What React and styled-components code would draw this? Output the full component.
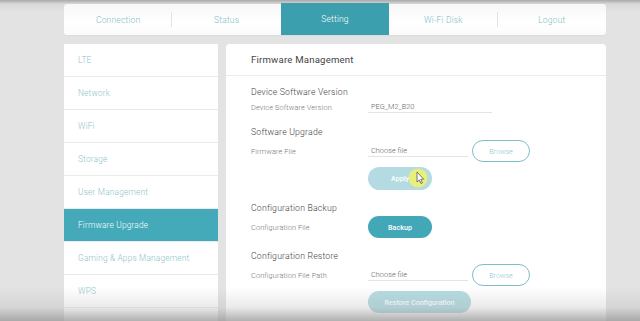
import React from 'react'
import styled, { createGlobalStyle } from 'styled-components'

const tabs = ['Connection', 'Status', 'Setting', 'Wi-Fi Disk', 'Logout']
const menu = [
  'LTE',
  'Network',
  'WiFi',
  'Storage',
  'User Management',
  'Firmware Upgrade',
  'Gaming & Apps Management',
  'WPS',
  '',
]

const Global = createGlobalStyle`
  html, body {
    margin: 0;
    padding: 0;
    background: #e2e2e2;
    font-family: Roboto, "Liberation Sans", sans-serif;
    overflow: hidden;
  }
`

const Page = styled.div`
  position: relative;
  width: 640px;
  height: 321px;
  box-sizing: border-box;
  padding: 4px 34px 0 64px;
  background: linear-gradient(180deg, #a9a9a9 0px, #d9d9d9 4px, #e3e3e3 12px, #e3e3e3 100%);
  overflow: hidden;
`

const Nav = styled.div`
  display: grid;
  grid-template-columns: repeat(5, 1fr);
  height: 31px;
  background: linear-gradient(180deg, #f7f7f7, #ffffff 60%, #fbfbfb);
  border-radius: 3px;
  box-shadow: 0 1px 1px rgba(0, 0, 0, 0.04);
`

const Tab = styled.div`
  position: relative;
  display: flex;
  align-items: center;
  justify-content: center;
  font-size: 8.5px;
  font-weight: 300;
  letter-spacing: 0.2px;
  color: ${p => (p.$active ? '#ffffff' : '#7fbcc7')};
  background: ${p => (p.$active ? '#3c9fad' : 'transparent')};
  margin-top: ${p => (p.$active ? '-1px' : '0')};
  &::after {
    content: '';
    display: ${p => (p.$divider ? 'block' : 'none')};
    position: absolute;
    right: 0;
    top: 8px;
    bottom: 8px;
    width: 1px;
    background: #e3e3e3;
  }
`

const Main = styled.div`
  display: flex;
  gap: 8px;
  margin-top: 9px;
`

const Sidebar = styled.div`
  width: 154px;
  flex: none;
  background: #fff;
  border-radius: 4px 4px 0 0;
`

const MenuItem = styled.div`
  height: 32px;
  border-bottom: 1px solid #ebebeb;
  display: flex;
  align-items: center;
  padding-left: 14px;
  font-size: 8.3px;
  font-weight: 300;
  letter-spacing: 0.2px;
  color: ${p => (p.$active ? '#ffffff' : '#8cc3cc')};
  background: ${p => (p.$active ? '#44a9b8' : '#ffffff')};
`

const Panel = styled.div`
  width: 380px;
  flex: none;
  background: #fff;
  border-radius: 4px 4px 0 0;
  height: 290px;
`

const PanelHead = styled.div`
  height: 31px;
  border-bottom: 1px solid #ececec;
  display: flex;
  align-items: center;
  padding-left: 25px;
  font-size: 9.6px;
  color: #444;
  letter-spacing: 0.2px;
`

const PanelBody = styled.div`
  padding: 8px 0 0 25px;
  display: flex;
  flex-direction: column;
  gap: 10px;
`

const Section = styled.div`
  display: flex;
  flex-direction: column;
`

const SectionTitle = styled.div`
  height: 16px;
  display: flex;
  align-items: center;
  font-size: 8.7px;
  font-weight: 300;
  color: #3f3f3f;
  letter-spacing: 0.2px;
`

const Row = styled.div`
  display: flex;
  align-items: center;
  height: ${p => p.$h || 22}px;
`

const Label = styled.div`
  width: 117px;
  flex: none;
  font-size: 7.4px;
  font-weight: 300;
  color: #777;
  letter-spacing: 0.1px;
`

const Field = styled.div`
  width: ${p => p.$w}px;
  box-sizing: border-box;
  height: 12px;
  border-bottom: 1px solid #e4e4e4;
  display: flex;
  align-items: center;
  padding-left: 3px;
  font-size: 7.4px;
  font-weight: 300;
  color: #666;
`

const Button = styled.div`
  width: ${p => p.$w}px;
  height: ${p => p.$h || 22}px;
  box-sizing: border-box;
  border-radius: 12px;
  display: flex;
  align-items: center;
  justify-content: center;
  font-size: 7.2px;
  font-weight: ${p => (p.$variant === 'outline' ? 300 : 500)};
  margin-left: ${p => p.$ml || 0}px;
  color: ${p => (p.$variant === 'outline' ? '#8fc7d0' : '#ffffff')};
  background: ${p =>
    p.$variant === 'solid' ? '#42a8b8' : p.$variant === 'faded' ? '#b3dbe1' : '#ffffff'};
  border: ${p => (p.$variant === 'outline' ? '1.5px solid #7cbfca' : 'none')};
`

const Indent = styled.div`
  padding-left: 117px;
  margin-top: 5px;
`

const Shade = styled.div`
  position: absolute;
  left: 0;
  right: 0;
  bottom: 0;
  height: 34px;
  pointer-events: none;
  background: linear-gradient(180deg, rgba(170, 170, 170, 0) 0%, rgba(170, 170, 170, 0.25) 60%, rgba(150, 150, 150, 0.75) 100%);
`

const Pointer = styled.svg`
  position: absolute;
  left: 407px;
  top: 167px;
  pointer-events: none;
`

const App = () => {
  return (
    <>
      <Global />
      <Page>
        <Nav>
          {tabs.map((t, i) => (
            <Tab key={t} $active={t === 'Setting'} $divider={i === 0 || i === 3}>
              {t}
            </Tab>
          ))}
        </Nav>
        <Main>
          <Sidebar>
            {menu.map((m, i) => (
              <MenuItem key={i} $active={m === 'Firmware Upgrade'}>
                {m}
              </MenuItem>
            ))}
          </Sidebar>
          <Panel>
            <PanelHead>Firmware Management</PanelHead>
            <PanelBody>
              <Section>
                <SectionTitle>Device Software Version</SectionTitle>
                <Row $h={14}>
                  <Label>Device Software Version</Label>
                  <Field $w={124}>PEG_M2_B20</Field>
                </Row>
              </Section>
              <Section>
                <SectionTitle>Software Upgrade</SectionTitle>
                <Row>
                  <Label>Firmware File</Label>
                  <Field $w={100}>Choose file</Field>
                  <Button $variant="outline" $w={58} $ml={4}>Browse</Button>
                </Row>
                <Indent>
                  <Button $variant="faded" $w={64} $h={23}>Apply</Button>
                </Indent>
              </Section>
              <Section>
                <SectionTitle>Configuration Backup</SectionTitle>
                <Row>
                  <Label>Configuration File</Label>
                  <Button $variant="solid" $w={64}>Backup</Button>
                </Row>
              </Section>
              <Section>
                <SectionTitle>Configuration Restore</SectionTitle>
                <Row>
                  <Label>Configuration File Path</Label>
                  <Field $w={100}>Choose file</Field>
                  <Button $variant="outline" $w={58} $ml={4}>Browse</Button>
                </Row>
                <Indent>
                  <Button $variant="faded" $w={103}>Restore Configuration</Button>
                </Indent>
              </Section>
            </PanelBody>
          </Panel>
        </Main>
        <Pointer width="22" height="22" viewBox="0 0 22 22">
          <circle cx="11" cy="11" r="9.5" fill="rgba(250, 245, 90, 0.75)" />
          <path d="M10 5 L10 15 L12.3 13 L14 16.5 L15.4 15.8 L13.8 12.4 L16.6 12.2 Z" fill="#fff" stroke="#555" strokeWidth="0.8" strokeLinejoin="round" />
        </Pointer>
        <Shade />
      </Page>
    </>
  )
}

export default App
